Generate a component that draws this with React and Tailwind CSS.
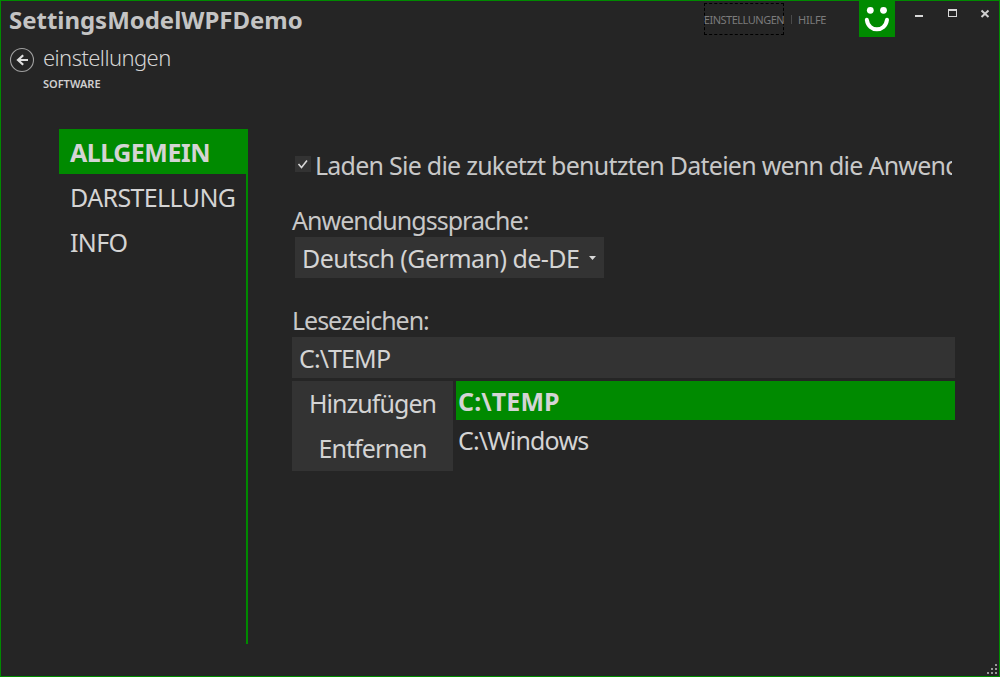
import React from "react";

function BackButton() {
  return (
    <svg width="26" height="26" viewBox="0 0 26 26" fill="none" className="shrink-0">
      <circle cx="13" cy="13" r="11.5" stroke="#a0a0a0" strokeWidth="1.1" />
      <path d="M19 13H9M14.2 8.2L9 13l5.2 4.8" stroke="#dedede" strokeWidth="2.2" />
    </svg>
  );
}

function Smiley() {
  return (
    <div className="h-9 w-9 bg-[#008a00]">
      <svg width="36" height="36" viewBox="0 0 36 36">
        <circle cx="11.3" cy="9.3" r="3.4" fill="#fff" />
        <circle cx="24.5" cy="9.3" r="3.4" fill="#fff" />
        <path d="M7.8 18.8C9.5 31.5 26.3 31.5 28 18.8" fill="none" stroke="#fff" strokeWidth="4" strokeLinecap="round" />
      </svg>
    </div>
  );
}

function WindowButtons() {
  return (
    <svg width="92" height="26" viewBox="0 0 92 26" className="ml-3" shapeRendering="crispEdges">
      <rect x="8" y="14" width="8" height="2" fill="#d8d8d8" />
      <path d="M41 8h9v8h-9z M42 10v5h7v-5z" fill="#d8d8d8" fillRule="evenodd" />
      <path d="M74.5 9.5l7 6.5M81.5 9.5l-7 6.5" stroke="#d0d0d0" strokeWidth="2" shapeRendering="auto" />
    </svg>
  );
}

function Header() {
  return (
    <header className="flex h-[120px] justify-between">
      <div className="flex flex-col pl-2">
        <h1 className="h-[37px] text-[24px] leading-[37px] font-bold tracking-[-0.03px] text-[#c4c4c4]">
          SettingsModelWPFDemo
        </h1>
        <div className="mt-[9px] flex">
          <BackButton />
          <div className="ml-2">
            <h2 className="-mt-px h-[22px] text-[22px] leading-[22px] font-light tracking-[-0.58px] text-[#d4d4d4]">
              einstellungen
            </h2>
            <p className="mt-[6px] text-[11px] leading-5 font-semibold text-[#cfcfcf]">SOFTWARE</p>
          </div>
        </div>
      </div>
      <div className="flex items-start text-[11px] text-[#7b7b7b]">
        <nav className="mt-[2px] flex items-center">
          <a className="flex h-8 w-20 items-center justify-center border border-dashed border-black pt-[2px] tracking-[-0.5px] whitespace-nowrap">
            EINSTELLUNGEN
          </a>
          <span className="mr-[6px] ml-[7px] h-[9px] w-px bg-[#4a4a4a]" />
          <a className="w-[61px] pt-[2px] tracking-[-0.25px]">HILFE</a>
        </nav>
        <Smiley />
        <WindowButtons />
      </div>
    </header>
  );
}

function Sidebar() {
  return (
    <aside className="mt-2 ml-[58px] h-[515px] w-[189px] border-r-2 border-[#008a00] text-[25px] leading-[45px] tracking-[-0.62px] text-[#d4d4d4]">
      <div className="-mr-0.5 h-[45px] bg-[#008a00] pt-px pl-[11px] font-bold tracking-[-0.5px]">ALLGEMEIN</div>
      <div className="h-[45px] pt-px pl-[11px]">DARSTELLUNG</div>
      <div className="h-[45px] pt-px pl-[11px]">INFO</div>
    </aside>
  );
}

function General() {
  return (
    <main className="ml-11 flex w-[663px] flex-col pt-[26px] text-[25px] text-[#c8c8c8]">
      <label className="flex h-9 w-[660px] items-center overflow-hidden pl-[3px]">
        <span className="-mt-[3px] flex h-4 w-4 shrink-0 items-center justify-center bg-[#333]">
          <svg width="16" height="16" viewBox="0 0 16 16" fill="none">
            <path d="M3.5 8l3 3.5 5.5-7" stroke="#d8d8d8" strokeWidth="1.6" />
          </svg>
        </span>
        <span className="ml-[4px] leading-9 tracking-[-0.755px] whitespace-nowrap">
          Laden Sie die zuketzt benutzten Dateien wenn die Anwendung
        </span>
      </label>
      <div className="mt-[19px] h-9 leading-9 tracking-[-0.96px]">Anwendungssprache:</div>
      <div className="-mt-px ml-[3px] flex h-[41px] w-[309px] items-center bg-[#333] pt-[2px] pl-[7px] text-[#d4d4d4]">
        <span className="w-[287px] tracking-[-0.55px] whitespace-nowrap">Deutsch (German) de-DE</span>
        <svg width="7" height="4" viewBox="0 0 7 4" className="-mt-0.5">
          <path d="M0 0h7L3.5 4z" fill="#d8d8d8" />
        </svg>
      </div>
      <div className="mt-[24px] h-9 leading-9 tracking-[-1.02px]">Lesezeichen:</div>
      <div className="-mt-px flex h-[41px] items-center bg-[#333] pt-[3px] pl-[7px] tracking-[-0.9px] text-[#d4d4d4]">
        C:\TEMP
      </div>
      <div className="mt-[3px] flex gap-[3px] text-[#d4d4d4]">
        <div className="w-[161px] bg-[#333] text-center leading-[45px] tracking-[-0.95px]">
          <div className="h-[45px]">Hinzufügen</div>
          <div className="h-[45px]">Entfernen</div>
        </div>
        <div className="flex-1 leading-[39px]">
          <div className="h-[39px] bg-[#008a00] pt-px pl-[2px] font-bold tracking-[0.1px]">C:\TEMP</div>
          <div className="h-[39px] pt-px pl-[2px] tracking-[-0.82px]">C:\Windows</div>
        </div>
      </div>
    </main>
  );
}

function ResizeGrip() {
  return (
    <svg width="10" height="10" viewBox="0 0 10 10" className="absolute right-[2px] bottom-[2px]" fill="#999" shapeRendering="crispEdges">
      <path d="M8 0h2v2h-2zM4 4h2v2h-2zM8 4h2v2h-2zM0 8h2v2h-2zM4 8h2v2h-2zM8 8h2v2h-2z" />
    </svg>
  );
}

export default function App() {
  return (
    <div className="relative h-[677px] w-[1000px] overflow-hidden border border-[#008a00] bg-[#252525] font-['Noto_Sans',sans-serif]">
      <Header />
      <div className="flex">
        <Sidebar />
        <General />
      </div>
      <ResizeGrip />
    </div>
  );
}
